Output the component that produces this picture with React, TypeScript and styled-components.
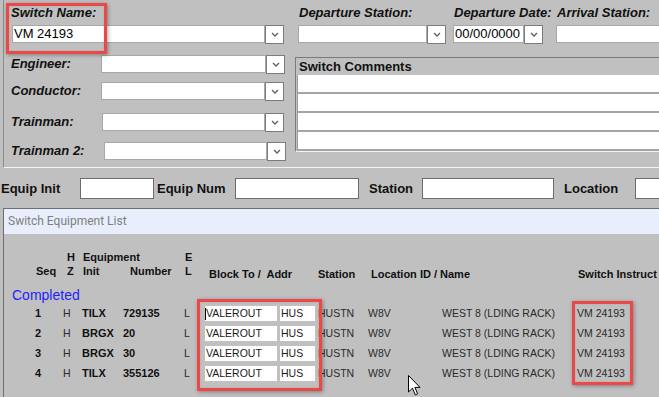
import React from 'react';
import styled, { createGlobalStyle } from 'styled-components';

const GlobalStyle = createGlobalStyle`
  html, body { margin: 0; padding: 0; background: #c0c0c0; }
  body { font-family: "Liberation Sans", Arial, sans-serif; }
  * { box-sizing: border-box; }
`;

const Page = styled.div`
  position: relative;
  width: 659px;
  height: 397px;
  overflow: hidden;
  background: #c0c0c0;
  display: flex;
  flex-direction: column;
  font-family: "Liberation Sans", Arial, sans-serif;
`;

/* ---------- top panel ---------- */
const TopPanel = styled.div`
  flex: none;
  display: flex;
  margin-left: 3px;
  width: 900px;
  height: 168px;
  border-left: 1px solid #8c8c8c;
  border-bottom: 1px solid #f4f4f4;
`;

const LeftCol = styled.div`
  flex: none;
  width: 291px;
  padding: 5px 0 0 7px;
  display: flex;
  flex-direction: column;
`;

const RightCol = styled.div`
  flex: none;
  width: 600px;
  padding-top: 5px;
  display: flex;
  flex-direction: column;
`;

const FieldLabel = styled.div<{ $w?: number }>`
  font-size: 13px;
  font-weight: bold;
  font-style: italic;
  line-height: 16px;
  height: 16px;
  color: #111;
  white-space: nowrap;
  width: ${(p) => (p.$w ? `${p.$w}px` : 'auto')};
  flex: none;
`;

const ComboWrap = styled.div<{ $w: number; $mt?: number; $ml?: number }>`
  display: flex;
  flex: none;
  width: ${(p) => p.$w}px;
  height: 18px;
  margin-top: ${(p) => p.$mt ?? 0}px;
  margin-left: ${(p) => p.$ml ?? 0}px;
`;

const ComboField = styled.div`
  flex: 1;
  background: #fff;
  border: 1px solid #a8a8a8;
  font-size: 13px;
  line-height: 16px;
  padding-left: 1px;
  color: #000;
  white-space: nowrap;
  overflow: hidden;
`;

const ComboButton = styled.div`
  flex: none;
  width: 19px;
  height: 19px;
  background: #fff;
  border: 1px solid #7c7c7c;
  display: flex;
  align-items: center;
  justify-content: center;
`;

const Chevron = () => (
  <svg width="8" height="5" viewBox="0 0 8 5">
    <path d="M1 1 L4 4 L7 1" fill="none" stroke="#5e5e5e" strokeWidth="1.3" />
  </svg>
);

const Combo: React.FC<{ w: number; value?: string; mt?: number; ml?: number; noButton?: boolean }> = ({
  w,
  value,
  mt,
  ml,
  noButton,
}) => (
  <ComboWrap $w={w} $mt={mt} $ml={ml}>
    <ComboField>{value}</ComboField>
    {!noButton && (
      <ComboButton>
        <Chevron />
      </ComboButton>
    )}
  </ComboWrap>
);

const PersonRow = styled.div<{ $mt: number }>`
  display: flex;
  align-items: center;
  height: 18px;
  margin-top: ${(p) => p.$mt}px;
`;

const TopFields = styled.div`
  display: flex;
  padding-left: 3px;
`;

const FieldGroup = styled.div<{ $w: number }>`
  flex: none;
  width: ${(p) => p.$w}px;
  display: flex;
  flex-direction: column;
`;

const GroupLabel = styled(FieldLabel)`
  padding-left: 1px;
`;

const CommentsBox = styled.div`
  margin-top: 14px;
  width: 500px;
  border-left: 1px solid #7a7a7a;
  border-top: 1px solid #7a7a7a;
  border-bottom: 1px solid #f4f4f4;
  padding-left: 1px;
`;

const CommentsHeader = styled.div`
  height: 17px;
  line-height: 17px;
  padding-left: 2px;
  font-size: 13px;
  font-weight: bold;
  color: #111;
`;

const CommentLine = styled.div`
  height: 19px;
  background: #fff;
  border-left: 1px solid #9c9c9c;
  border-bottom: 2px solid #a4a4a4;
`;

/* ---------- equip bar ---------- */
const EquipBar = styled.div`
  flex: none;
  height: 40px;
  display: flex;
  align-items: center;
  padding-left: 1px;
`;

const EquipLabel = styled.div<{ $w: number; $ml?: number }>`
  flex: none;
  width: ${(p) => p.$w}px;
  margin-left: ${(p) => p.$ml ?? 0}px;
  font-size: 13px;
  font-weight: bold;
  color: #111;
  white-space: nowrap;
`;

const EquipInput = styled.div<{ $w: number }>`
  flex: none;
  width: ${(p) => p.$w}px;
  height: 21px;
  background: #fff;
  border: 1px solid #6c6c6c;
`;

/* ---------- list panel ---------- */
const ListPanel = styled.div`
  flex: 1;
  margin-left: 3px;
  border-left: 1px solid #6e6e6e;
  border-top: 1px solid #6e6e6e;
  display: flex;
  flex-direction: column;
`;

const TitleBar = styled.div`
  flex: none;
  height: 25px;
  background: #e8eefc;
  padding-left: 4px;
  line-height: 25px;
  font-family: Roboto, "Liberation Sans", Arial, sans-serif;
  font-size: 12px;
  color: #7e7e7e;
`;

const ListBody = styled.div`
  padding: 16px 0 0 31px;
  display: grid;
  grid-template-columns: 28px 19px 41px 61px 21px 75px 38px 50px 74px 135px 120px;
  grid-auto-rows: auto;
  align-items: center;
`;

const HeadCell = styled.div<{ $col: number; $span?: number; $dx?: number; $low?: boolean }>`
  grid-column: ${(p) => p.$col} / span ${(p) => p.$span ?? 1};
  padding-left: ${(p) => p.$dx ?? 0}px;
  padding-top: ${(p) => (p.$low ? 3 : 0)}px;
  height: 14px;
  line-height: 14px;
  font-size: 11px;
  font-weight: bold;
  color: #111;
  white-space: pre;
`;

const SectionLabel = styled.div`
  grid-column: 1 / -1;
  margin-left: -23px;
  margin-top: 9px;
  height: 16px;
  line-height: 16px;
  font-size: 14px;
  color: #1e1eff;
`;

const DataCell = styled.div<{ $bold?: boolean; $col: number }>`
  grid-column: ${(p) => p.$col};
  height: 20px;
  line-height: 20px;
  font-size: ${(p) => (p.$bold ? 11 : 10.5)}px;
  font-weight: ${(p) => (p.$bold ? 'bold' : 'normal')};
  color: ${(p) => (p.$bold ? '#111' : '#2a2a2a')};
  white-space: nowrap;
`;

const InputCell = styled.div<{ $col: number }>`
  grid-column: ${(p) => p.$col};
  height: 20px;
  display: flex;
  align-items: center;
`;

const TableInput = styled.div<{ $w: number; $caret?: boolean }>`
  position: relative;
  width: ${(p) => p.$w}px;
  height: 15px;
  background: #fff;
  font-size: 10.5px;
  line-height: 15px;
  color: #1a1a1a;
  padding-left: 1px;
  white-space: nowrap;
  &::before {
    content: '';
    display: ${(p) => (p.$caret ? 'block' : 'none')};
    position: absolute;
    left: 0;
    top: 2px;
    width: 1px;
    height: 12px;
    background: #000;
  }
`;

/* ---------- overlays ---------- */
const Highlight = styled.div<{ $x: number; $y: number; $w: number; $h: number }>`
  position: absolute;
  left: ${(p) => p.$x}px;
  top: ${(p) => p.$y}px;
  width: ${(p) => p.$w}px;
  height: ${(p) => p.$h}px;
  border: 3px solid #ec4848;
  box-shadow: 1px 1px 4px rgba(0, 0, 0, 0.35), inset 0 0 2px rgba(0, 0, 0, 0.15);
  pointer-events: none;
`;

const Cursor = styled.svg`
  position: absolute;
  left: 408px;
  top: 375px;
`;

const rows = [
  { seq: '1', init: 'TILX', num: '729135' },
  { seq: '2', init: 'BRGX', num: '20' },
  { seq: '3', init: 'BRGX', num: '30' },
  { seq: '4', init: 'TILX', num: '355126' },
];

export default function App() {
  return (
    <Page>
      <GlobalStyle />
      <TopPanel>
        <LeftCol>
          <FieldLabel>Switch Name:</FieldLabel>
          <Combo w={272} value="VM 24193" mt={4} ml={1} />
          <PersonRow $mt={12}>
            <FieldLabel $w={90}>Engineer:</FieldLabel>
            <Combo w={184} />
          </PersonRow>
          <PersonRow $mt={9}>
            <FieldLabel $w={90}>Conductor:</FieldLabel>
            <Combo w={183} />
          </PersonRow>
          <PersonRow $mt={13}>
            <FieldLabel $w={91}>Trainman:</FieldLabel>
            <Combo w={182} />
          </PersonRow>
          <PersonRow $mt={11}>
            <FieldLabel $w={93}>Trainman 2:</FieldLabel>
            <Combo w={182} />
          </PersonRow>
        </LeftCol>
        <RightCol>
          <TopFields>
            <FieldGroup $w={155}>
              <GroupLabel>Departure Station:</GroupLabel>
              <Combo w={148} mt={4} />
            </FieldGroup>
            <FieldGroup $w={103}>
              <GroupLabel>Departure Date:</GroupLabel>
              <Combo w={90} value="00/00/0000" mt={4} />
            </FieldGroup>
            <FieldGroup $w={200}>
              <GroupLabel>Arrival Station:</GroupLabel>
              <Combo w={200} mt={4} noButton />
            </FieldGroup>
          </TopFields>
          <CommentsBox>
            <CommentsHeader>Switch Comments</CommentsHeader>
            <CommentLine />
            <CommentLine />
            <CommentLine />
            <CommentLine />
          </CommentsBox>
        </RightCol>
      </TopPanel>

      <EquipBar>
        <EquipLabel $w={79}>Equip Init</EquipLabel>
        <EquipInput $w={74} />
        <EquipLabel $w={78} $ml={3}>Equip Num</EquipLabel>
        <EquipInput $w={124} />
        <EquipLabel $w={53} $ml={10}>Station</EquipLabel>
        <EquipInput $w={132} />
        <EquipLabel $w={71} $ml={10}>Location</EquipLabel>
        <EquipInput $w={100} />
      </EquipBar>

      <ListPanel>
        <TitleBar>Switch Equipment List</TitleBar>
        <ListBody>
          <HeadCell $col={2} $dx={4}>H</HeadCell>
          <HeadCell $col={3} $span={2} $dx={1}>Equipment</HeadCell>
          <HeadCell $col={5} $dx={1} style={{ gridColumnEnd: 'span 7' }}>E</HeadCell>

          <HeadCell $col={1} $dx={1}>Seq</HeadCell>
          <HeadCell $col={2} $dx={4}>Z</HeadCell>
          <HeadCell $col={3} $dx={1}>Init</HeadCell>
          <HeadCell $col={4} $dx={7}>Number</HeadCell>
          <HeadCell $col={5} $dx={1}>L</HeadCell>
          <HeadCell $col={6} $span={2} $dx={4} $low>{'Block To /  Addr'}</HeadCell>
          <HeadCell $col={8} $dx={0} $low>Station</HeadCell>
          <HeadCell $col={9} $span={2} $dx={3} $low>Location ID / Name</HeadCell>
          <HeadCell $col={11} $dx={1} $low>Switch Instruct</HeadCell>

          <SectionLabel>Completed</SectionLabel>

          {rows.map((r, i) => (
            <React.Fragment key={r.seq}>
              <DataCell $col={1} $bold>{r.seq}</DataCell>
              <DataCell $col={2}>H</DataCell>
              <DataCell $col={3} $bold>{r.init}</DataCell>
              <DataCell $col={4} $bold>{r.num}</DataCell>
              <DataCell $col={5}>L</DataCell>
              <InputCell $col={6}>
                <TableInput $w={72} $caret={i === 0}>VALEROUT</TableInput>
              </InputCell>
              <InputCell $col={7}>
                <TableInput $w={35}>HUS</TableInput>
              </InputCell>
              <DataCell $col={8}>HUSTN</DataCell>
              <DataCell $col={9}>W8V</DataCell>
              <DataCell $col={10}>WEST 8 (LDING RACK)</DataCell>
              <DataCell $col={11}>VM 24193</DataCell>
            </React.Fragment>
          ))}
        </ListBody>
      </ListPanel>

      <Highlight $x={6} $y={3} $w={101} $h={51} />
      <Highlight $x={197} $y={299} $w={125} $h={92} />
      <Highlight $x={572} $y={301} $w={61} $h={84} />

      <Cursor width="13" height="21" viewBox="0 0 13 21">
        <path
          d="M0.5 0.5 L0.5 17 L4.5 13.2 L7.3 19.8 L9.6 18.8 L6.9 12.4 L12 12.4 Z"
          fill="#fff"
          stroke="#000"
          strokeWidth="1"
          strokeLinejoin="miter"
        />
      </Cursor>
    </Page>
  );
}
